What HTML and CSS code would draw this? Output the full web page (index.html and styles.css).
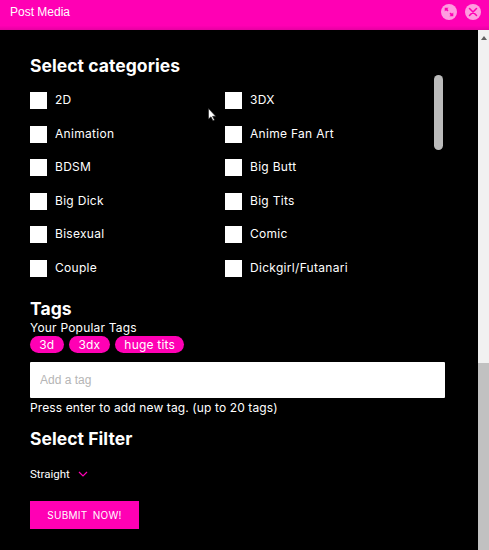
FILE: index.html
```html
<!DOCTYPE html>
<html lang="en">
<head>
    <meta charset="UTF-8">
    <title>Post Media</title>
    <link rel="stylesheet" href="styles.css">
</head>
<body>
    <header class="top-bar">
        <span class="top-title">Post Media</span>
        <div class="top-actions">
            <span class="round-btn">
                <svg width="18" height="18" viewBox="0 0 18 18"><path d="M3.5 3.5h5l-1.7 1.7 1.6 1.6-1.6 1.6-1.6-1.6-1.700 1.700zM14.500 14.500h-5l1.700-1.700-1.600-1.600 1.600-1.600 1.600 1.600 1.700-1.700z" fill="#ff00b4"/></svg>
            </span>
            <span class="round-btn">
                <svg width="18" height="18" viewBox="0 0 18 18"><path d="M4.500 4.500l9 9M13.500 4.500l-9 9" stroke="#ff00b4" stroke-width="2" stroke-linecap="round"/></svg>
            </span>
        </div>
    </header>

    <div class="page">
        <main class="content">
            <h2 class="section-title">Select categories</h2>
            <div class="category-box">
                <div class="category-grid">
                    <label class="category"><span class="check"></span>2D</label>
                    <label class="category"><span class="check"></span>3DX</label>
                    <label class="category"><span class="check"></span>Animation</label>
                    <label class="category"><span class="check"></span>Anime Fan Art</label>
                    <label class="category"><span class="check"></span>BDSM</label>
                    <label class="category"><span class="check"></span>Big Butt</label>
                    <label class="category"><span class="check"></span>Big Dick</label>
                    <label class="category"><span class="check"></span>Big Tits</label>
                    <label class="category"><span class="check"></span>Bisexual</label>
                    <label class="category"><span class="check"></span>Comic</label>
                    <label class="category"><span class="check"></span>Couple</label>
                    <label class="category"><span class="check"></span>Dickgirl/Futanari</label>
                </div>
                <div class="list-thumb"></div>
            </div>

            <h2 class="section-title tags-title">Tags</h2>
            <p class="small-text popular-text">Your Popular Tags</p>
            <div class="pills">
                <span class="pill">3d</span>
                <span class="pill">3dx</span>
                <span class="pill">huge tits</span>
            </div>
            <input class="tag-input" type="text" placeholder="Add a tag">
            <p class="small-text help-text">Press enter to add new tag. (up to 20 tags)</p>

            <h2 class="section-title filter-title">Select Filter</h2>
            <div class="filter-select">
                Straight
                <svg width="10" height="6" viewBox="0 0 10 6"><path d="M1 1l4 4 4-4" fill="none" stroke="#ff00b4" stroke-width="1.200"/></svg>
            </div>
            <button class="submit-btn">SUBMIT NOW!</button>
        </main>

        <aside class="page-scroll">
            <span class="scroll-arrow"></span>
            <span class="page-thumb"></span>
        </aside>
    </div>

    <!-- mouse pointer caught in the screenshot -->
    <svg class="pointer" width="9" height="14" viewBox="0 0 9 14"><path d="M.5.5v10.500l2.500-2.200 2 4 1.500-.7-2-3.800h3.200z" fill="#fff" stroke="#222" stroke-width=".6"/></svg>
</body>
</html>
```

FILE: styles.css
```css
/* Post Media popup */
body {
    margin: 0;
    height: 550px;
    overflow: hidden;
    background-color: #000;
    color: #fff;
    font-family: Inter, "Noto Sans", sans-serif;
    display: flex;
    flex-direction: column;
}

.top-bar {
    height: 30px;
    flex: none;
    box-sizing: border-box;
    padding: 0 8px 6px 10px;
    background: linear-gradient(#ff00b4 85%, #e600a2);
    display: flex;
    align-items: center;
    justify-content: space-between;
}

.top-title {
    font-family: "Liberation Sans", Arial, sans-serif;
    font-size: 12px;
}

.top-actions {
    display: flex;
    gap: 8px;
}

.round-btn {
    width: 16px;
    height: 16px;
    border-radius: 50%;
    background-color: #ff9ce0;
    display: flex;
    align-items: center;
    justify-content: center;
}

.round-btn svg {
    width: 14px;
    height: 14px;
}

.page {
    flex: 1;
    display: flex;
    min-height: 0;
}

.content {
    flex: 1;
    padding: 26px 33px 0 30px;
}

.section-title {
    margin: 0;
    font-size: 17.500px;
    line-height: 20px;
    font-weight: 700;
    letter-spacing: .05px;
}

.category-box {
    display: flex;
    justify-content: space-between;
    margin-top: -1px;
    height: 215px;
}

.category-grid {
    width: 390px;
    padding-top: 17px;
    display: grid;
    grid-template-columns: 195px 195px;
    grid-auto-rows: 33.5px;
    align-content: start;
}

.category {
    display: flex;
    align-items: flex-start;
    font-size: 12px;
    line-height: 16px;
    letter-spacing: .3px;
}

.check {
    width: 17px;
    height: 17px;
    margin-right: 8px;
    background-color: #fff;
    flex: none;
}

.list-thumb {
    width: 9px;
    height: 75px;
    margin-right: 2px;
    border-radius: 5px;
    background-color: #bbb;
}

.tags-title {
    margin-top: 9px;
}

.small-text {
    margin: 0;
    font-size: 12px;
    line-height: 14px;
    letter-spacing: .2px;
}

.popular-text {
    margin-top: 2px;
}

.pills {
    display: flex;
    gap: 5.500px;
    margin-top: 1px;
}

.pill {
    height: 17px;
    padding: 0 9.250px;
    border-radius: 9px;
    background-color: #ff00b4;
    font-size: 12px;
    line-height: 17px;
    letter-spacing: .2px;
}

.tag-input {
    display: block;
    width: 415px;
    height: 36px;
    margin-top: 9px;
    padding: 0 10px;
    box-sizing: border-box;
    border: 0;
    border-radius: 1px;
    background-color: #fff;
    font-family: "Liberation Sans", Arial, sans-serif;
    font-size: 12px;
}

.tag-input::placeholder {
    color: #b5b5b5;
}

.help-text {
    margin-top: 3px;
    letter-spacing: .12px;
}

.filter-title {
    margin-top: 14px;
}

.filter-select {
    margin-top: 17px;
    font-family: Roboto, sans-serif;
    font-size: 11.500px;
    line-height: 16px;
    display: flex;
    align-items: center;
    gap: 8px;
}

.submit-btn {
    display: block;
    width: 109px;
    height: 28px;
    margin-top: 19px;
    padding: 0;
    border: 0;
    background-color: #ff00b4;
    color: #fff;
    font-family: Inter, sans-serif;
    font-size: 10px;
    letter-spacing: .3px;
    word-spacing: 2px;
}

.page-scroll {
    width: 11px;
    flex: none;
    background-color: #f1f1f1;
    display: flex;
    flex-direction: column;
    justify-content: space-between;
    align-items: center;
}

.scroll-arrow {
    margin-top: 6px;
    border-left: 3px solid transparent;
    border-right: 3px solid transparent;
    border-bottom: 4px solid #606060;
}

.page-thumb {
    width: 100%;
    height: 187px;
    background-color: #c1c1c1;
}

.pointer {
    position: absolute;
    left: 208px;
    top: 108px;
}
```
